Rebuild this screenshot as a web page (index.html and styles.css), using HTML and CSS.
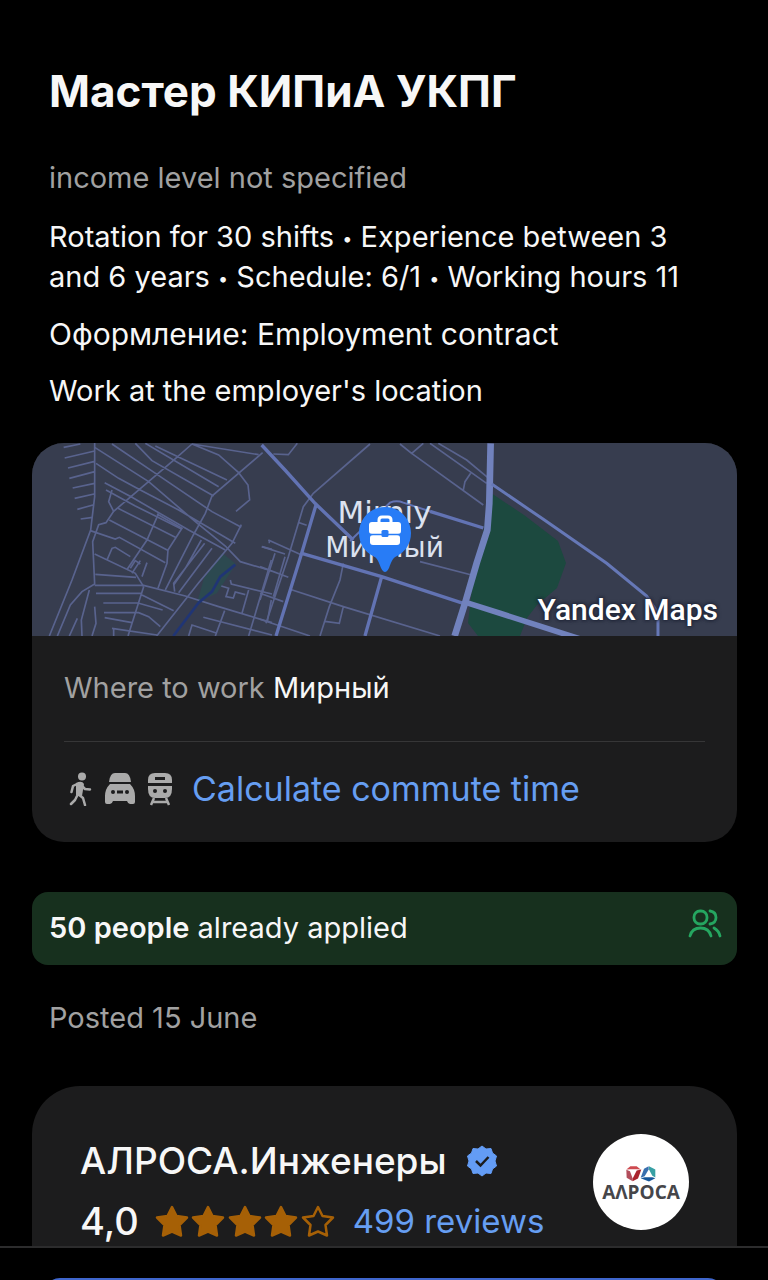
FILE: index.html
```html
<!DOCTYPE html>
<html lang="en">
<head>
<meta charset="utf-8">
<meta name="viewport" content="width=device-width, initial-scale=1">
<title>Мастер КИПиА УКПГ</title>
<link rel="stylesheet" href="styles.css">
</head>
<body>
<main class="vacancy">
  <header class="summary">
    <h1 class="title">Мастер КИПиА УКПГ</h1>
    <p class="muted income">income level not specified</p>
    <p>Rotation for 30 shifts <span class="dot">•</span> Experience between 3 and 6 years <span class="dot">•</span> Schedule: 6/1 <span class="dot">•</span> Working hours 11</p>
    <p class="contract">Оформление: Employment contract</p>
    <p>Work at the employer's location</p>
  </header>

  <section class="location">
    <div class="map">
      <svg class="map-art" viewBox="0 0 705 193" preserveAspectRatio="xMidYMid slice" aria-hidden="true">
        <rect width="705" height="193" fill="#373d4f"/>
        <path d="M459 50L492 72 526 98 534 120 525 145 505 162 495 175 488 193H446L436 180 440 145Z" fill="#1c493f"/>
        <path d="M190 110L204 121 185 150 165 160 172 135Z" fill="#2c4950"/>
        <g transform="translate(0 -3) scale(.3333)" fill="none" stroke="#59638e" stroke-width="5">
          <path d="M188 8V170L176 270 120 420 52 588M95 22L145 12M98 54L188 33M108 84L188 64M112 115L188 95M122 144L188 130M128 175L186 162M136 208L183 195M146 237L182 232"/>
          <path d="M480 12L420 65 245 214 222 248 200 254 182 305 188 432 150 455 115 495 76 588M175 272L250 297 262 292 400 368M188 22L350 125 490 245 580 318 625 365 720 393M192 70L260 115 325 150 440 210 610 310M218 128L300 172 470 270 580 330M222 150L310 198 450 268M240 12L375 103 540 215 628 262M310 10L360 62 545 168M340 10L560 140M370 18L585 120M480 12L560 45 620 98 648 135 653 180 612 214M480 12L680 44"/>
          <path d="M692 38L540 168 520 220 484 285 400 450M628 254L600 310 500 428 374 588M240 150L230 185 245 214M258 205L430 292M232 240L410 332M380 220L345 300 284 390M375 222L450 265 408 330 405 370 378 445M518 310L425 430 428 455M540 325L440 458M508 300L460 385 425 435M188 342L310 400 335 440M225 360L240 325 250 322 295 350M325 362L300 400M345 368L330 410M295 385L310 362 325 372"/>
          <path d="M190 403L312 412M188 436H335L460 468 560 500 720 548M192 460H328M214 489H318L392 510M216 518H320L350 530 385 560M218 533L300 548M240 565L375 585M172 450L148 540 150 588M188 500L192 550 180 588M136 535L112 588M335 440L288 588M330 465L425 512M245 565V588"/>
          <path d="M595 420L598 432 720 462M568 438L590 445 582 470 604 474 610 456 640 464M650 450L630 520M718 360L650 588M578 512L550 588M514 532L720 585M470 588L480 555 555 580M690 320L720 328M712 300V310M718 480L706 545"/>
          <path d="M610 374L565 410 540 455 500 488 424 588" stroke="#203575" stroke-width="8"/>
        </g>
        <g transform="translate(228 -3) scale(.3333)" fill="none" stroke="#59638e" stroke-width="5">
          <path d="M330 12L160 160 130 200 85 350 18 550M40 42L85 44 112 10M420 12L455 40 490 10M455 40L670 195M510 10L680 130M535 10L620 60 690 118M632 100L615 125 610 150M25 300L125 345M5 320L75 342M0 380L85 412M0 460L70 485M0 538L150 588M118 248L140 256M45 340L0 480M75 350L40 470M90 448L250 500 540 588M250 370L240 420 208 500 180 588M250 500L238 550 195 544M480 365L635 405"/>
          <path d="M5 15L75 90 165 190 280 300M168 195L125 340 48 588M125 340L365 410 610 490M365 410L315 588M510 214L670 264" stroke="#6273b3" stroke-width="10"/>
          <path d="M270 303L390 188Q410 180 430 188L510 214" stroke="#6273b3" stroke-width="6"/>
          <path d="M692 10L688 190 682 270 650 370 615 490 584 588" stroke="#7182bd" stroke-width="20"/>
          <path d="M610 485L720 520 970 600" stroke="#7182bd" stroke-width="17"/>
        </g>
        <g transform="translate(458 -3) scale(.3333)" fill="none" stroke="#6678b7" stroke-width="9"><path d="M5 132L160 238 350 370 470 468 504 520V588"/></g>
      </svg>
      <div class="place"><span class="place-latin">Mirniy</span><span>Мирный</span></div>
      <svg class="pin" viewBox="0 0 54 66" aria-hidden="true">
        <path d="M27 0C12.500 0 1 11.500 1 26c0 11 6 19 14 23 4 2 5 4 8 12q4 8 8 0c3-8 4-10 8-12 8-4 14-12 14-23C53 11.500 41.500 0 27 0Z" fill="#287cf6"/>
        <path d="M21 16v-3q0-3 3-3h6q3 0 3 3v3" fill="none" stroke="#fff" stroke-width="3"/>
        <rect x="11" y="15" width="32" height="12" rx="3" fill="#fff"/>
        <rect x="12" y="28" width="30" height="10" rx="3" fill="#fff"/>
        <rect x="23.500" y="23" width="7" height="7" rx="1.500" fill="#287cf6"/>
        <path d="M11 27.500H43" stroke="#287cf6" stroke-width="1.500"/>
      </svg>
      <span class="map-brand">Yandex Maps</span>
    </div>
    <div class="location-info">
      <p class="where"><span class="muted">Where to work</span> Мирный</p>
      <a class="commute" href="#commute">
        <svg class="walk" viewBox="0 0 24 34" aria-hidden="true"><circle cx="14" cy="4.500" r="4" fill="#aaa"/><path d="M9 12L5 14 3.500 20M10 22L15 26 17 33M9 24L7 28 3 32M14 14L17 17 22 17.500" fill="none" stroke="#aaa" stroke-width="2.500" stroke-linecap="round" stroke-linejoin="round"/><path d="M8 11q6-3 8 1l-2 12-6-1Z" fill="#aaa"/></svg>
        <svg class="car" viewBox="0 0 32 34" aria-hidden="true"><path d="M5 10Q6 1 11 1h10q5 0 6 9Z" fill="#aaa"/><path d="M6 12h20q5 5 5 12v6q0 2-2 2h-3q-2 0-3-3H9q-1 3-3 3H3q-2 0-2-2v-6Q1 17 6 12Z" fill="#aaa"/><circle cx="9" cy="20" r="2" fill="#1c1c1d"/><circle cx="23" cy="20" r="2" fill="#1c1c1d"/><path d="M13 20h6" stroke="#1c1c1d" stroke-width="3"/></svg>
        <svg class="train" viewBox="0 0 28 34" aria-hidden="true"><path d="M2 11V8q0-7 7-7h10q7 0 7 7v3Z" fill="#aaa"/><path d="M9 6.500h10" stroke="#1c1c1d" stroke-width="3"/><path d="M2 14h24v3q0 9-7 9H9q-7 0-7-9Z" fill="#aaa"/><circle cx="9" cy="19" r="2" fill="#1c1c1d"/><circle cx="19" cy="19" r="2" fill="#1c1c1d"/><path d="M8 26L5 33M20 26l3 7M7 30h14" fill="none" stroke="#aaa" stroke-width="2.500"/></svg>
        <span>Calculate commute time</span>
      </a>
    </div>
  </section>

  <div class="applied">
    <p><strong>50 people</strong> already applied</p>
    <svg class="people" viewBox="0 0 34 30" fill="none" stroke="#25a660" stroke-width="2.800" stroke-linecap="round" aria-hidden="true"><rect x="6" y="2" width="13" height="13" rx="6"/><path d="M2 27q2-8 10.500-8T23 27M22 2q6 1 6 6.500t-6 6.500M26 19q5 3 6 8"/></svg>
  </div>
  <p class="posted muted">Posted 15 June</p>

  <section class="employer">
    <div class="employer-text">
      <h2 class="name">АЛРОСА.Инженеры
        <svg class="badge" viewBox="0 0 32 32" role="img" aria-label="Verified"><path d="M16 1l4 3 5-.500 1.500 4.500 4 3-1.500 5 1.500 5-4 3-1.500 4.500-5-.500-4 3-4-3-5 .500-1.500-4.500-4-3 1.500-5-1.500-5 4-3L7 3.500l5 .500Z" fill="#639cf5" stroke="#639cf5" stroke-linejoin="round"/><path d="M10 16l4.500 4.500 8-8.500" fill="none" stroke="#1c1c1d" stroke-width="2.500"/></svg>
      </h2>
      <div class="rating">
        <strong class="score">4,0</strong>
        <svg class="stars" viewBox="0 0 180 34" role="img" aria-label="4 of 5 stars">
          <defs><path id="star" d="M17 3l4.500 9 10.500 1.500-7.500 7.500 1.500 10.500-9-4-9 4 1.500-10.500L2 13.500 12.500 12Z" stroke-linejoin="round" stroke-width="2.500"/></defs>
          <g fill="#a66006" stroke="#a66006"><use href="#star"/><use href="#star" x="36"/><use href="#star" x="73"/><use href="#star" x="109"/></g>
          <use href="#star" x="146" fill="none" stroke="#a66006"/>
        </svg>
        <a class="reviews" href="#reviews">499 reviews</a>
      </div>
    </div>
    <div class="logo">
      <svg class="gems" viewBox="0 0 90 50" aria-hidden="true">
        <path d="M1 13L13 3H32L44 13 33 12H13Z" fill="#ce4a50"/><path d="M1 14L12 18 20 40V48L2 38Z" fill="#b24d5b"/><path d="M46 13L32 16 20 40V48L36 40Z" fill="#a9242d"/>
        <path d="M44 38L56 33 68 13V3L54 11Z" fill="#386fae"/><path d="M69 3L88 13V37L79 32 69 13Z" fill="#38a0a4"/><path d="M44 39L56 36H79L88 39 69 49Z" fill="#16569a"/>
      </svg>
      <span>АΛРОСА</span>
    </div>
  </section>
</main>
<footer class="action-bar"><button class="apply" type="button" aria-label="Apply"></button></footer>
</body>
</html>
```
FILE: styles.css
```css
* { box-sizing: border-box; }
body {
  margin: 0;
  height: 100vh;
  display: flex;
  flex-direction: column;
  overflow: hidden;
  background: #000;
  color: #f7f7f7;
  font: 29px/40px Inter, "Noto Sans", sans-serif;
}
p, h1, h2 { margin: 0; }
a { color: #669ef2; text-decoration: none; }
.muted { color: #a1a1a1; }
.vacancy {
  flex: 1;
  min-height: 0;
  overflow: hidden;
  padding: 66px 31px 0 32px;
}
.summary {
  display: flex;
  flex-direction: column;
  gap: 17px;
  padding: 0 17px 32px;
}
.title {
  margin-bottom: 25px;
  font-size: 44px;
  line-height: 50px;
  font-weight: 700;
}
.income { margin-bottom: 2px; }
.contract { font-size: 30px; }
.dot { font-size: 18px; line-height: 16px; vertical-align: middle; }
.location {
  overflow: hidden;
  border-radius: 32px;
  background: #1c1c1d;
}
.map {
  position: relative;
  display: grid;
  height: 193px;
}
.map-art { width: 100%; height: 193px; display: block; }
.place {
  position: absolute;
  top: 51px;
  left: 50%;
  display: flex;
  flex-direction: column;
  align-items: center;
  transform: translateX(-50%);
  font: 28px/36px "DejaVu Sans", sans-serif;
  color: #dce2ef;
}
.place-latin { font-size: 31px; }
.pin {
  position: absolute;
  top: 64px;
  left: 50%;
  width: 54px;
  height: 66px;
  transform: translateX(-50%);
}
.map-brand {
  position: absolute;
  right: 19px;
  bottom: 8px;
  font: 500 30px/36px Roboto, sans-serif;
  color: #fff;
  text-shadow: 0 0 3px #202638, 0 0 3px #202638, 0 0 4px #202638;
}
.location-info { padding: 32px 32px 33px; }
.where { padding-bottom: 33px; border-bottom: 1px solid #363637; }
.commute {
  display: flex;
  align-items: center;
  padding-top: 27px;
  font-size: 34px;
}
.commute svg { height: 34px; flex: none; }
.walk { width: 24px; margin: 0 12px 0 4px; }
.car { width: 32px; margin-right: 10px; }
.train { width: 28px; margin-right: 18px; }
.applied {
  display: flex;
  align-items: center;
  justify-content: space-between;
  margin-top: 50px;
  padding: 16px 15px 17px 17px;
  border-radius: 16px;
  background: #17301e;
}
.applied strong { font-weight: 600; }
.people { width: 34px; height: 30px; margin-bottom: 8px; }
.posted { padding: 33px 17px 48px; }
.employer {
  display: flex;
  justify-content: space-between;
  padding: 48px 48px 64px;
  border-radius: 48px;
  background: #1c1c1d;
}
.name {
  display: flex;
  align-items: center;
  gap: 19px;
  font-size: 37px;
  line-height: 54px;
  font-weight: 500;
}
.badge { width: 32px; height: 32px; }
.rating { display: flex; align-items: center; line-height: 66px; }
.score { font-size: 38px; font-weight: 500; margin-right: 16px; }
.stars { width: 180px; height: 34px; margin-right: 18px; }
.reviews { font-size: 33px; }
.logo {
  display: flex;
  flex-direction: column;
  align-items: center;
  width: 96px;
  height: 96px;
  padding-top: 31px;
  border-radius: 50%;
  background: #fff;
  color: #46464a;
  font: 700 19px/20px "Open Sans", sans-serif;
}
.gems { width: 30px; height: 17px; }
.action-bar {
  flex: none;
  height: 34px;
  overflow: hidden;
  padding: 30px 44px 0;
  border-top: 2px solid #2c2c2d;
}
.apply {
  display: block;
  width: 100%;
  height: 72px;
  border: 0;
  border-radius: 16px;
  background: #3f66cc;
}
```
